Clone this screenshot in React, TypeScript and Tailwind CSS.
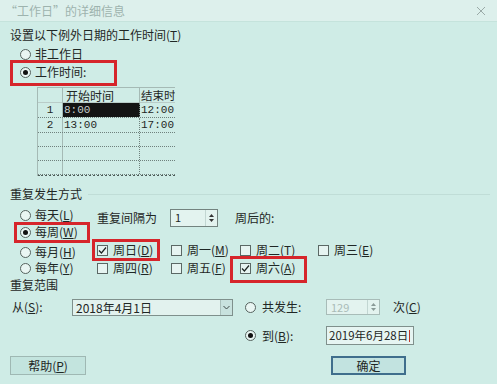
import type { ReactNode } from 'react'

const font = { fontFamily: '"Noto Sans CJK SC", "Noto Sans", sans-serif' }
const mono = { fontFamily: '"Liberation Mono", monospace' }

function Radio({ checked = false }: { checked?: boolean }) {
  return (
    <span className="w-[11px] h-[11px] rounded-full border border-[#56635f] bg-[#e9f6f3] flex items-center justify-center shrink-0">
      {checked && <span className="w-[5px] h-[5px] rounded-full bg-[#111]" />}
    </span>
  )
}

function Check({ checked = false }: { checked?: boolean }) {
  return (
    <span className="w-[11px] h-[11px] border border-[#5b6865] bg-[#e6f4f1] flex items-center justify-center shrink-0">
      {checked && (
        <svg width="9" height="9" viewBox="0 0 9 9">
          <path d="M1 4.5 L3.4 7 L8 1.5" fill="none" stroke="#1c2422" strokeWidth="1.2" />
        </svg>
      )}
    </span>
  )
}

function Mark({ className }: { className: string }) {
  return <span className={`absolute border-[3px] border-[#d6252b] pointer-events-none ${className}`} />
}

function Key({ k }: { k: string }) {
  return (
    <>
      (<span className="underline underline-offset-1">{k}</span>)
    </>
  )
}

function Opt({ checked, children }: { checked?: boolean; children: ReactNode }) {
  return (
    <div className="flex items-center gap-[4px] h-[16px] leading-[16px] whitespace-nowrap">
      <Radio checked={checked} />
      <span>{children}</span>
    </div>
  )
}

function Day({ checked, children }: { checked?: boolean; children: ReactNode }) {
  return (
    <div className="flex items-center gap-[5px] h-[16px] leading-[16px] whitespace-nowrap">
      <Check checked={checked} />
      <span>{children}</span>
    </div>
  )
}

function Spin({ value, disabled, className }: { value: string; disabled?: boolean; className: string }) {
  return (
    <div className={`flex border ${disabled ? 'border-[#a8bcb8] text-[#a9bbb7]' : 'border-[#73837f]'} bg-[#e3f3ef] ${className}`}>
      <span className="flex-1 pl-[4px] leading-[15px] text-[11px]">{value}</span>
      <span className="w-[12px] flex flex-col items-center justify-center gap-[2px] border-l border-[#c2d6d2]">
        <svg width="5" height="3" viewBox="0 0 5 3"><path d="M0 3 L2.5 0 L5 3Z" fill={disabled ? '#8a9a97' : '#333'} /></svg>
        <svg width="5" height="3" viewBox="0 0 5 3"><path d="M0 0 L2.5 3 L5 0Z" fill={disabled ? '#8a9a97' : '#333'} /></svg>
      </span>
    </div>
  )
}

const rows = [
  ['1', '8:00', '12:00'],
  ['2', '13:00', '17:00'],
  ['', '', ''],
  ['', '', ''],
  ['', '', ''],
]

export default function App() {
  return (
    <div className="w-[497px] h-[384px] bg-[#cfece6] text-[12px] text-[#1f2725] overflow-hidden" style={font}>
      <div className="h-[22px] bg-[#ddf0ec] flex items-center justify-between pl-[5px] pr-[11px] border-b border-[#c5e3dc]">
        <span className="text-[#9db3ae] leading-[22px]">“工作日”的详细信息</span>
        <svg width="10" height="10" viewBox="0 0 10 10">
          <path d="M1 1 L9 9 M9 1 L1 9" stroke="#9aaaa7" strokeWidth="1" />
        </svg>
      </div>

      <div className="pl-[10px]">
        <div className="mt-[5px] h-[16px] leading-[16px]">
          设置以下例外日期的工作时间<Key k="T" />
        </div>
        <div className="ml-[10px] mt-[3px]">
          <Opt>非工作日</Opt>
        </div>
        <div className="ml-[10px] mt-[2px] relative w-fit">
          <Opt checked>工作时间:</Opt>
          <Mark className="-left-[10px] -top-[4px] w-[107px] h-[26px]" />
        </div>

        <div className="ml-[27px] mt-[7px] w-[138px] h-[89px] border-l border-t border-[#a5bab5] overflow-hidden">
          <div className="grid grid-cols-[25px_77px_36px] h-[15px] leading-[15px] border-b border-[#b9ccc8]">
            <span className="border-r border-[#a5bab5]" />
            <span className="pl-[3px] border-r border-[#a5bab5]">开始时间</span>
            <span className="pl-[1px] whitespace-nowrap text-[11.5px]">结束时</span>
          </div>
          {rows.map((r, i) => (
            <div
              key={i}
              className={`grid grid-cols-[25px_77px_36px] ${i < 2 ? 'h-[15px] leading-[14px]' : 'h-[14px]'} border-b border-dotted border-[#6f817d]`}
            >
              <span className="text-center border-r border-[#a5bab5] text-[11px]" style={mono}>
                {r[0]}
              </span>
              <span
                className={`pl-[1px] border-r border-dotted border-[#6f817d] text-[11px] ${i === 0 ? 'bg-[#141414] text-[#c8cfcd]' : ''}`}
                style={mono}
              >
                {r[1]}
              </span>
              <span className="pl-[1px] text-[11px]" style={mono}>
                {r[2]}
              </span>
            </div>
          ))}
          <div className="border-t-2 border-dotted border-[#4d5c59]" />
        </div>

        <div className="mt-[10px] h-[16px] leading-[16px] flex items-center pr-[7px]">
          <span>重复发生方式</span>
          <span className="flex-1 ml-[6px] border-t border-[#c0ddd7]" />
        </div>

        <div className="mt-[5px] flex">
          <div className="ml-[10px] w-[77px] flex flex-col">
            <Opt>每天<Key k="L" /></Opt>
            <div className="mt-[1px] relative w-fit">
              <Opt checked>每周<Key k="W" /></Opt>
              <Mark className="-left-[6px] -top-[2px] w-[76px] h-[21px]" />
            </div>
            <div className="mt-[4px]">
              <Opt>每月<Key k="H" /></Opt>
            </div>
            <Opt>每年<Key k="Y" /></Opt>
          </div>

          <div className="flex flex-col">
            <div className="mt-[2px] h-[18px] flex items-center">
              <span className="w-[73px]">重复间隔为</span>
              <Spin value="1" className="w-[48px] h-[18px]" />
              <span className="ml-[17px]">周后的:</span>
            </div>
            <div className="mt-[15px] grid grid-cols-[74px_69px_78px_auto]">
              <div className="relative w-fit">
                <Day checked>周日<Key k="D" /></Day>
                <Mark className="-left-[5px] -top-[3px] w-[68px] h-[22px]" />
              </div>
              <Day>周一<Key k="M" /></Day>
              <Day>周二<Key k="T" /></Day>
              <Day>周三<Key k="E" /></Day>
            </div>
            <div className="mt-[2px] grid grid-cols-[74px_69px_78px_auto]">
              <Day>周四<Key k="R" /></Day>
              <Day>周五<Key k="F" /></Day>
              <div className="relative w-fit">
                <Day checked>周六<Key k="A" /></Day>
                <Mark className="-left-[10px] -top-[4px] w-[77px] h-[27px]" />
              </div>
            </div>
          </div>
        </div>

        <div className="mt-[1px] h-[16px] leading-[16px]">重复范围</div>

        <div className="mt-[5px] flex">
          <div className="w-[223px] h-[18px] flex items-center">
            <span className="ml-[2px] w-[60px]">
              从<Key k="S" />:
            </span>
            <div className="w-[161px] h-[17px] flex border border-[#7f908c] bg-[#e2f2ee]">
              <span className="flex-1 pl-[3px] leading-[15px]">2018年4月1日</span>
              <span className="w-[12px] bg-[#c8e2de] border-l border-[#a9c0bb] flex items-center justify-center">
                <svg width="7" height="5" viewBox="0 0 7 5">
                  <path d="M0.5 1 L3.5 4 L6.5 1" fill="none" stroke="#3e4b48" strokeWidth="1" />
                </svg>
              </span>
            </div>
          </div>

          <div className="ml-[12px] flex flex-col">
            <div className="h-[18px] flex items-center">
              <div className="w-[81px] flex items-center gap-[6px]">
                <Radio />
                <span>共发生:</span>
              </div>
              <Spin value="129" disabled className="w-[54px] h-[16px]" />
              <span className="ml-[13px]">
                次<Key k="C" />
              </span>
            </div>
            <div className="mt-[10px] h-[19px] flex items-center">
              <div className="w-[81px] flex items-center gap-[6px]">
                <Radio checked />
                <span>
                  到<Key k="B" />:
                </span>
              </div>
              <div className="w-[88px] h-[19px] flex items-center border border-[#7f908c] bg-[#e6f5f2] pl-[2px] whitespace-nowrap">
                <span className="text-[11.5px]">2019年6月28日</span>
                <span className="ml-[1px] w-px h-[12px] bg-[#c0392b] shrink-0" />
              </div>
            </div>
          </div>
        </div>

        <div className="mt-[11px] flex">
          <button className="w-[76px] h-[19px] bg-[#c3e4de] border border-[#9fb8b3] leading-[17px] text-center">
            帮助<Key k="P" />
          </button>
          <button className="ml-[245px] w-[75px] h-[19px] bg-[#c2e3e0] border-2 border-[#3f6e8c] leading-[15px] text-center">
            确定
          </button>
        </div>
      </div>
    </div>
  )
}
